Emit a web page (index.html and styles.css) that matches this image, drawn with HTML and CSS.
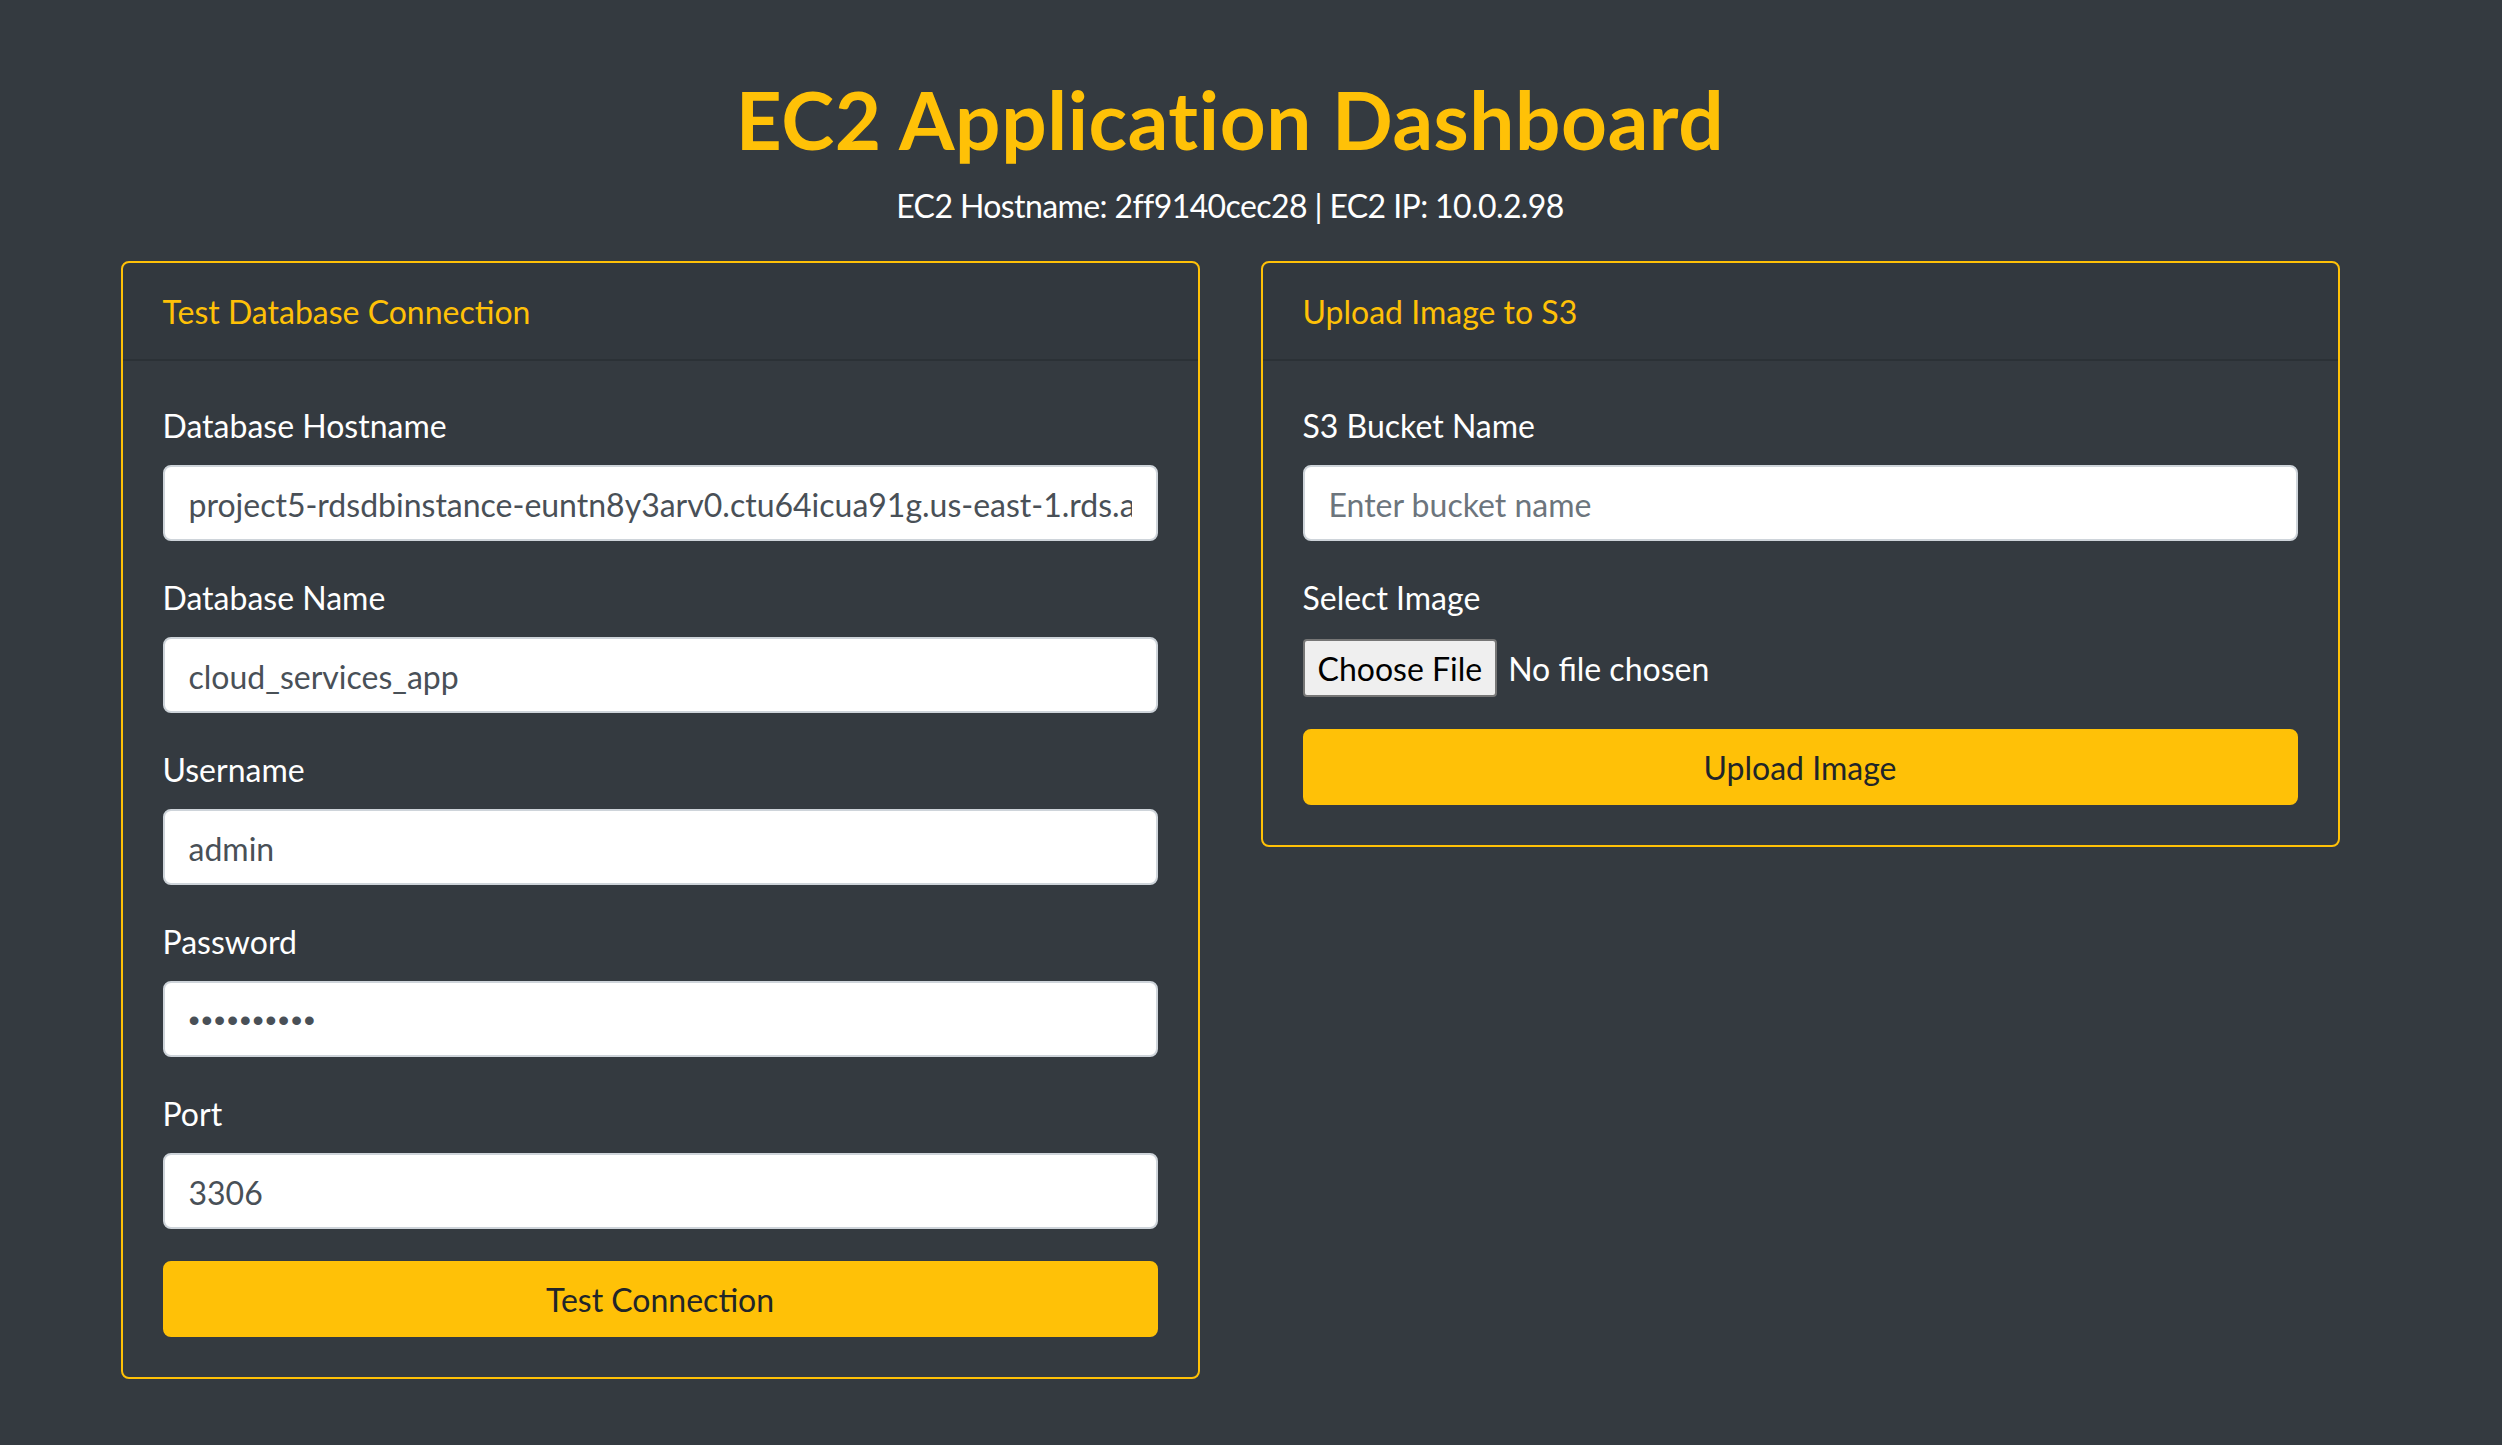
FILE: index.html
```html
<!DOCTYPE html>
<html lang="en">
<head>
<meta charset="utf-8">
<title>EC2 Application Dashboard</title>
<link rel="stylesheet" href="styles.css">
</head>
<body>
<div class="container">
  <header class="page-head">
    <h1 class="title">EC2 Application Dashboard</h1>
    <p class="subtitle">EC2 Hostname: 2ff9140cec28 | EC2 IP: 10.0.2.98</p>
  </header>
  <div class="grid">
    <section class="card">
      <div class="card-header">Test Database Connection</div>
      <form class="card-body">
        <div class="form-group">
          <label class="label">Database Hostname</label>
          <input class="input" type="text" value="project5-rdsdbinstance-euntn8y3arv0.ctu64icua91g.us-east-1.rds.amazonaws.com">
        </div>
        <div class="form-group">
          <label class="label">Database Name</label>
          <input class="input" type="text" value="cloud_services_app">
        </div>
        <div class="form-group">
          <label class="label">Username</label>
          <input class="input" type="text" value="admin">
        </div>
        <div class="form-group">
          <label class="label">Password</label>
          <input class="input input-password" type="password" value="password12">
        </div>
        <div class="form-group">
          <label class="label">Port</label>
          <input class="input" type="text" value="3306">
        </div>
        <button class="btn" type="button">Test Connection</button>
      </form>
    </section>
    <section class="card">
      <div class="card-header">Upload Image to S3</div>
      <form class="card-body">
        <div class="form-group">
          <label class="label">S3 Bucket Name</label>
          <input class="input" type="text" placeholder="Enter bucket name">
        </div>
        <div class="form-group">
          <label class="label">Select Image</label>
          <div class="file-row">
            <span class="file-btn">Choose File</span>
            <span class="file-text">No file chosen</span>
          </div>
        </div>
        <button class="btn" type="button">Upload Image</button>
      </form>
    </section>
  </div>
</div>
</body>
</html>
```
FILE: styles.css
```css
* { box-sizing: border-box; }
html, body {
  margin: 0;
  background: #343a40;
}
body {
  padding: 71px 42px 60px 0;
  font-family: Lato, "Open Sans", sans-serif;
  font-size: 32px;
  line-height: 48px;
  color: #ffffff;
}
.container {
  width: 2219px;
  margin: 0 auto;
}
.page-head {
  text-align: center;
  margin-bottom: 31px;
}
.title {
  margin: 0 0 15px;
  font-size: 80px;
  line-height: 96px;
  font-weight: 700;
  letter-spacing: 0.6px;
  color: #ffc107;
}
.subtitle {
  margin: 0;
  font-size: 32px;
  line-height: 48px;
  letter-spacing: -0.6px;
}
.grid {
  display: grid;
  grid-template-columns: 1fr 1fr;
  column-gap: 61px;
  align-items: start;
}
.card {
  border: 2px solid #ffc107;
  border-radius: 8px;
  overflow: hidden;
}
.card-header {
  padding: 25px 40px 23px;
  background: rgba(0, 0, 0, 0.03);
  border-bottom: 2px solid rgba(0, 0, 0, 0.125);
  color: #ffc107;
}
.card-body {
  padding: 40px;
  margin: 0;
}
.form-group {
  margin-bottom: 32px;
  display: flex;
  flex-direction: column;
}
.label {
  padding-top: 1px;
  margin-bottom: 15px;
  color: #ffffff;
}
.input {
  display: block;
  width: 100%;
  height: 76px;
  padding: 13px 24px 11px;
  font-family: inherit;
  font-size: 32px;
  line-height: 48px;
  color: #495057;
  background: #ffffff;
  border: 2px solid #ced4da;
  border-radius: 8px;
  outline: none;
}
.input-password {
  font-family: "Liberation Sans", sans-serif;
  letter-spacing: 1.6px;
}
.input::placeholder {
  color: #6c757d;
}
.file-row {
  display: flex;
  align-items: center;
  height: 58px;
  margin-top: 2px;
}
.file-btn {
  display: flex;
  align-items: center;
  height: 58px;
  padding: 1px 13px 0;
  background: #efefef;
  border: 2px solid #767676;
  border-radius: 4px;
  color: #000000;
  margin-right: 11px;
}
.file-text {
  padding-top: 2px;
  color: #ffffff;
}
.btn {
  display: block;
  width: 100%;
  height: 76px;
  padding: 13px 24px 11px;
  font-family: inherit;
  font-size: 32px;
  line-height: 48px;
  color: #212529;
  background: #ffc107;
  border: 2px solid #ffc107;
  border-radius: 8px;
  text-align: center;
}
```
